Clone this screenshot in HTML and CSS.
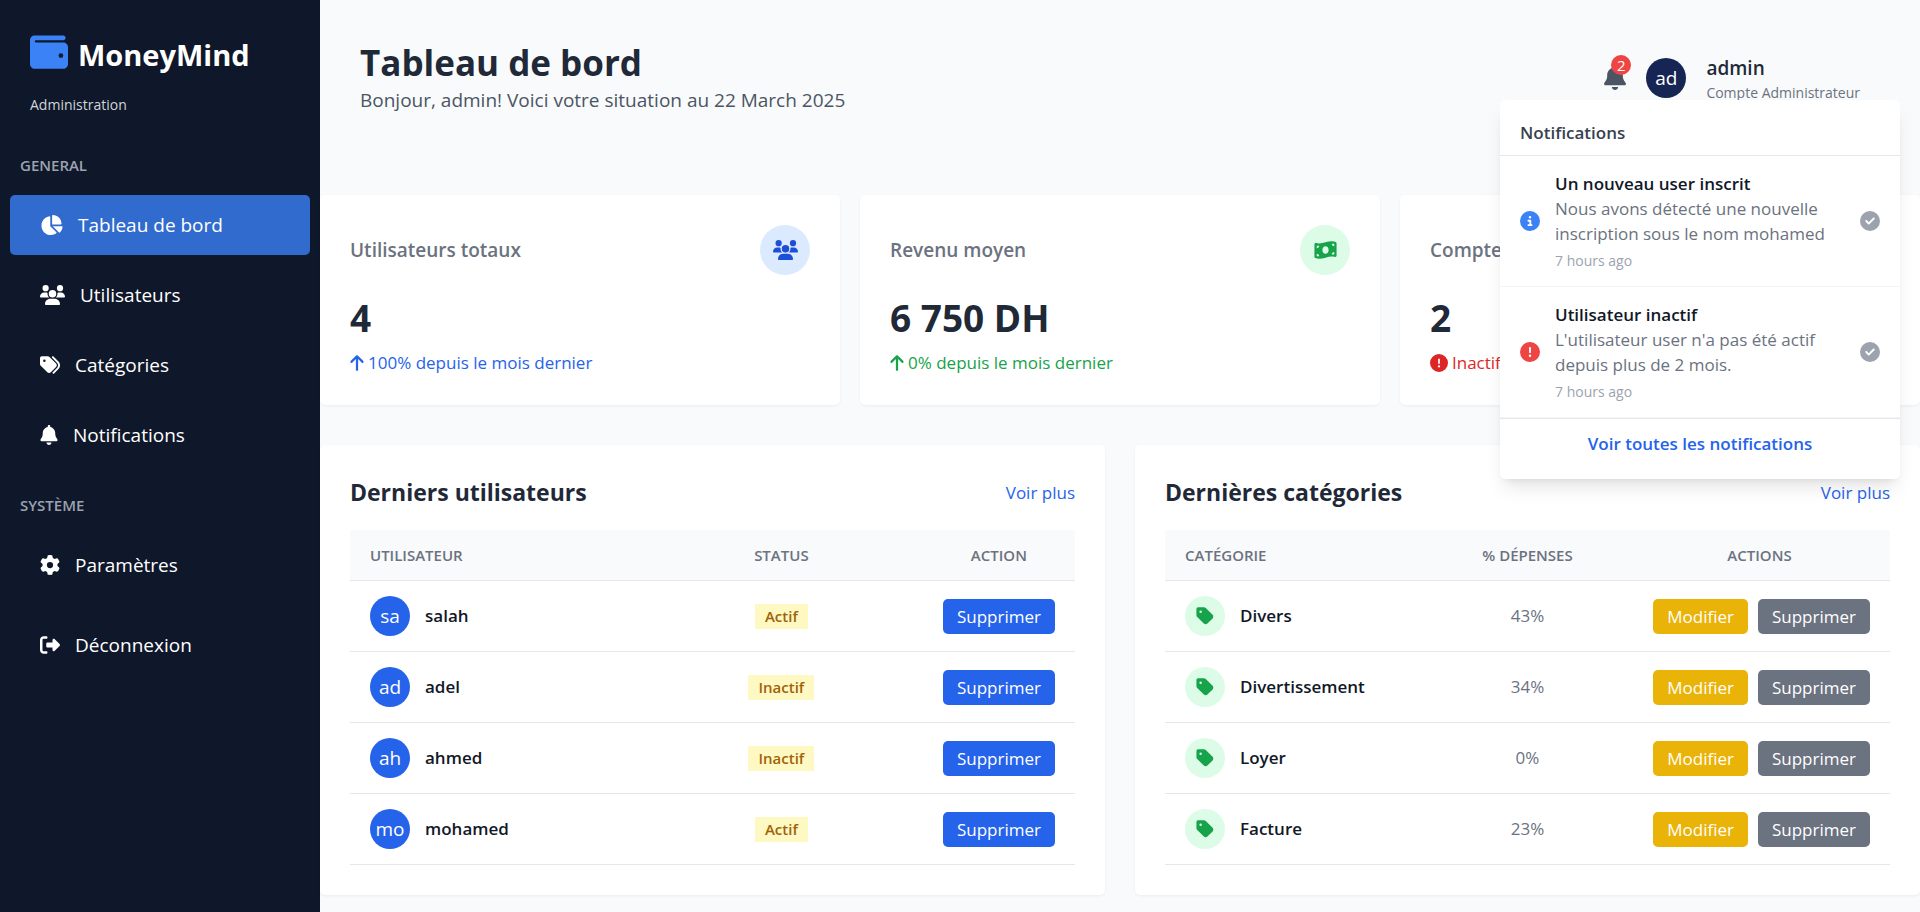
FILE: index.html
```html
<!DOCTYPE html>
<html lang="fr">
<head>
<meta charset="utf-8">
<meta name="viewport" content="width=device-width, initial-scale=1">
<title>MoneyMind - Tableau de bord</title>
<link rel="stylesheet" href="styles.css">
</head>
<body>
<svg class="sprite" aria-hidden="true">
  <symbol id="wallet" viewBox="0 0 512 512"><path d="M64 32C28.7 32 0 60.7 0 96V416c0 35.3 28.7 64 64 64H448c35.3 0 64-28.7 64-64V192c0-35.3-28.7-64-64-64H80c-8.8 0-16-7.2-16-16s7.2-16 16-16H448c17.7 0 32-14.3 32-32s-14.3-32-32-32H64zM416 272a32 32 0 1 1 0 64 32 32 0 1 1 0-64z"/></symbol>
  <symbol id="pie" viewBox="0 0 576 512"><path d="M304 240V16.6c0-9 7-16.6 16-16.6C443.7 0 544 100.3 544 224c0 9-7.6 16-16.6 16H304zM32 272C32 150.7 122.1 50.3 239 34.3c9.2-1.3 17 6.1 17 15.4V288L412.5 444.5c6.7 6.7 6.2 17.7-1.5 23.1C371.8 495.6 323.8 512 272 512C139.5 512 32 404.6 32 272zm526.4 16c9.3 0 16.6 7.8 15.4 17c-7.7 55.9-34.6 105.6-73.9 142.3c-6 5.6-15.4 5.2-21.2-.7L320 288H558.4z"/></symbol>
  <symbol id="users" viewBox="0 0 640 512"><path d="M144 0a80 80 0 1 1 0 160A80 80 0 1 1 144 0zM512 0a80 80 0 1 1 0 160A80 80 0 1 1 512 0zM0 298.7C0 239.8 47.8 192 106.7 192h42.7c15.9 0 31 3.5 44.6 9.7c-1.3 7.2-1.9 14.7-1.9 22.3c0 38.2 16.8 72.5 43.3 96c-.2 0-.4 0-.7 0H21.3C9.6 320 0 310.4 0 298.7zM405.3 320c-.2 0-.4 0-.7 0c26.6-23.5 43.3-57.8 43.3-96c0-7.6-.7-15-1.9-22.3c13.6-6.3 28.7-9.7 44.6-9.7h42.7C592.2 192 640 239.8 640 298.7c0 11.8-9.6 21.3-21.3 21.3H405.3zM224 224a96 96 0 1 1 192 0 96 96 0 1 1-192 0zM128 485.3C128 411.7 187.7 352 261.3 352H378.7C452.3 352 512 411.7 512 485.3c0 14.7-11.9 26.7-26.7 26.7H154.7c-14.7 0-26.7-11.9-26.7-26.7z"/></symbol>
  <symbol id="tags" viewBox="0 0 512 512"><path d="M345 39.1L472.8 168.4c52.4 53 52.4 138.2 0 191.2L360.8 472.9c-9.3 9.4-24.5 9.5-33.9 .2s-9.5-24.5-.2-33.9L438.6 325.9c33.9-34.3 33.9-89.4 0-123.7L310.9 72.9c-9.3-9.4-9.2-24.6 .2-33.9s24.6-9.2 33.9 .2zM0 229.5V80C0 53.5 21.5 32 48 32H197.5c17 0 33.3 6.7 45.3 18.7l168 168c25 25 25 65.5 0 90.5L277.3 442.7c-25 25-65.5 25-90.5 0l-168-168C6.7 262.7 0 246.5 0 229.5zM144 144a32 32 0 1 0 -64 0 32 32 0 1 0 64 0z"/></symbol>
  <symbol id="tag" viewBox="0 0 448 512"><path d="M0 80V229.5c0 17 6.7 33.3 18.7 45.3l176 176c25 25 65.5 25 90.5 0L418.7 317.3c25-25 25-65.5 0-90.5l-176-176c-12-12-28.3-18.7-45.3-18.7H48C21.5 32 0 53.5 0 80zm112 32a32 32 0 1 1 0 64 32 32 0 1 1 0-64z"/></symbol>
  <symbol id="bell" viewBox="0 0 448 512"><path d="M224 0c-17.7 0-32 14.3-32 32V51.2C119 66 64 130.6 64 208v18.8c0 47-17.3 92.4-48.5 127.6l-7.4 8.3c-8.4 9.4-10.4 22.9-5.3 34.4S19.4 416 32 416H416c12.6 0 24-7.4 29.2-18.9s3.1-25-5.3-34.4l-7.4-8.3C401.3 319.2 384 273.9 384 226.8V208c0-77.4-55-142-128-156.8V32c0-17.7-14.3-32-32-32zm45.3 493.3c12-12 18.7-28.3 18.7-45.3H224 160c0 17 6.7 33.3 18.7 45.3s28.3 18.7 45.3 18.7s33.3-6.7 45.3-18.7z"/></symbol>
  <symbol id="gear" viewBox="0 0 512 512"><path d="M495.9 166.6c3.2 8.7 .5 18.4-6.4 24.6l-43.3 39.4c1.1 8.3 1.7 16.8 1.7 25.4s-.6 17.1-1.7 25.4l43.3 39.4c6.9 6.2 9.6 15.9 6.4 24.6c-4.4 11.9-9.7 23.3-15.8 34.3l-4.7 8.1c-6.6 11-14 21.4-22.1 31.2c-5.9 7.2-15.7 9.6-24.5 6.8l-55.7-17.7c-13.4 10.3-28.2 18.9-44 25.4l-12.5 57.1c-2 9.1-9 16.3-18.2 17.8c-13.8 2.3-28 3.5-42.5 3.5s-28.7-1.2-42.5-3.5c-9.2-1.5-16.2-8.7-18.2-17.8l-12.5-57.1c-15.8-6.5-30.6-15.1-44-25.4L83.1 425.9c-8.8 2.8-18.6 .3-24.5-6.8c-8.1-9.8-15.5-20.2-22.1-31.2l-4.7-8.1c-6.1-11-11.4-22.4-15.8-34.3c-3.2-8.7-.5-18.4 6.4-24.6l43.3-39.4C64.6 273.1 64 264.6 64 256s.6-17.1 1.7-25.4L22.4 191.2c-6.9-6.2-9.6-15.9-6.4-24.6c4.4-11.9 9.7-23.3 15.8-34.3l4.7-8.1c6.6-11 14-21.4 22.1-31.2c5.9-7.2 15.7-9.6 24.5-6.8l55.7 17.7c13.4-10.3 28.2-18.9 44-25.4l12.5-57.1c2-9.1 9-16.3 18.2-17.8C227.3 1.2 241.5 0 256 0s28.7 1.2 42.5 3.5c9.2 1.5 16.2 8.7 18.2 17.8l12.5 57.1c15.8 6.5 30.6 15.1 44 25.4l55.7-17.7c8.8-2.8 18.6-.3 24.5 6.8c8.1 9.8 15.5 20.2 22.1 31.2l4.7 8.1c6.1 11 11.4 22.4 15.8 34.3zM256 336a80 80 0 1 0 0-160 80 80 0 1 0 0 160z"/></symbol>
  <symbol id="logout" viewBox="0 0 512 512"><path d="M377.9 105.9L500.7 228.7c7.2 7.2 11.3 17.1 11.3 27.3s-4.1 20.1-11.3 27.3L377.9 406.1c-6.4 6.4-15 9.9-24 9.9c-18.7 0-33.9-15.2-33.9-33.9l0-62.1-128 0c-17.7 0-32-14.3-32-32l0-64c0-17.7 14.3-32 32-32l128 0 0-62.1c0-18.7 15.2-33.9 33.9-33.9c9 0 17.6 3.6 24 9.9zM160 96L96 96c-17.7 0-32 14.3-32 32l0 256c0 17.7 14.3 32 32 32l64 0c17.7 0 32 14.3 32 32s-14.3 32-32 32l-64 0c-53 0-96-43-96-96L0 128C0 75 43 32 96 32l64 0c17.7 0 32 14.3 32 32s-14.3 32-32 32z"/></symbol>
  <symbol id="arrow-up" viewBox="0 0 384 512"><path d="M214.6 41.4c-12.5-12.5-32.8-12.5-45.3 0l-160 160c-12.5 12.5-12.5 32.8 0 45.3s32.8 12.5 45.3 0L160 141.2V448c0 17.7 14.3 32 32 32s32-14.3 32-32V141.2L329.4 246.6c12.5 12.5 32.8 12.5 45.3 0s12.5-32.8 0-45.3l-160-160z"/></symbol>
  <symbol id="alert" viewBox="0 0 512 512"><path d="M256 512A256 256 0 1 0 256 0a256 256 0 1 0 0 512zm0-384c13.3 0 24 10.7 24 24V264c0 13.3-10.7 24-24 24s-24-10.7-24-24V152c0-13.3 10.7-24 24-24zM224 352a32 32 0 1 1 64 0 32 32 0 1 1 -64 0z"/></symbol>
  <symbol id="info" viewBox="0 0 512 512"><path d="M256 512A256 256 0 1 0 256 0a256 256 0 1 0 0 512zM216 336h24V272H216c-13.3 0-24-10.7-24-24s10.7-24 24-24h48c13.3 0 24 10.7 24 24v88h8c13.3 0 24 10.7 24 24s-10.7 24-24 24H216c-13.3 0-24-10.7-24-24s10.7-24 24-24zm40-208a32 32 0 1 1 0 64 32 32 0 1 1 0-64z"/></symbol>
  <symbol id="check" viewBox="0 0 512 512"><path d="M256 512A256 256 0 1 0 256 0a256 256 0 1 0 0 512zM369 209L241 337c-9.4 9.4-24.6 9.4-33.9 0l-64-64c-9.4-9.4-9.4-24.6 0-33.9s24.6-9.4 33.9 0l47 47L335 175c9.4-9.4 24.6-9.4 33.9 0s9.4 24.6 0 33.9z"/></symbol>
  <symbol id="money" viewBox="0 0 576 512"><path d="M0 112.5V422.3c0 18 10.1 35 27 41.3c87 32.5 174 10.3 261-11.9c79.8-20.3 159.6-40.7 239.3-18.9c23 6.3 48.7-9.5 48.7-33.4V89.7c0-18-10.1-35-27-41.3C462 15.9 375 38.1 288 60.3C208.2 80.6 128.4 100.9 48.7 79.1C25.6 72.8 0 88.6 0 112.5zM288 352c-44.2 0-80-43-80-96s35.8-96 80-96s80 43 80 96s-35.8 96-80 96zM64 352c35.3 0 64 28.7 64 64H64V352zm64-208c0 35.3-28.7 64-64 64V144h64zM512 304v64H448c0-35.3 28.7-64 64-64zM448 96h64v64c-35.3 0-64-28.7-64-64z"/></symbol>
</svg>

<div class="layout">
  <aside class="sidebar">
    <div class="brand">
      <svg class="brand-icon" viewBox="0 0 512 512" aria-hidden="true"><use href="#wallet"/></svg>
      <span class="brand-name">MoneyMind</span>
    </div>
    <p class="brand-role">Administration</p>

    <h2 class="nav-title">GENERAL</h2>
    <nav class="nav">
      <a class="nav-link active" href="#"><svg class="icon icon-pie" viewBox="0 0 576 512" aria-hidden="true"><use href="#pie"/></svg>Tableau de bord</a>
      <a class="nav-link" href="#"><svg class="icon icon-users" viewBox="0 0 640 512" aria-hidden="true"><use href="#users"/></svg>Utilisateurs</a>
      <a class="nav-link" href="#"><svg class="icon" viewBox="0 0 512 512" aria-hidden="true"><use href="#tags"/></svg>Catégories</a>
      <a class="nav-link" href="#"><svg class="icon icon-bell" viewBox="0 0 448 512" aria-hidden="true"><use href="#bell"/></svg>Notifications</a>
    </nav>

    <h2 class="nav-title">SYSTÈME</h2>
    <nav class="nav nav-system">
      <a class="nav-link" href="#"><svg class="icon" viewBox="0 0 512 512" aria-hidden="true"><use href="#gear"/></svg>Paramètres</a>
      <button class="nav-link" type="button"><svg class="icon" viewBox="0 0 512 512" aria-hidden="true"><use href="#logout"/></svg>Déconnexion</button>
    </nav>
  </aside>

  <main class="content">
    <header class="topbar">
      <div class="topbar-heading">
        <h1 class="page-title">Tableau de bord</h1>
        <p class="page-subtitle">Bonjour, admin! Voici votre situation au 22 March 2025</p>
      </div>
      <div class="account">
        <button class="bell-button" type="button" aria-label="Notifications">
          <svg class="bell-icon" viewBox="0 0 448 512" aria-hidden="true"><use href="#bell"/></svg>
          <span class="bell-count">2</span>
        </button>
        <span class="avatar avatar-navy">ad</span>
        <div class="account-text">
          <p class="account-name">admin</p>
          <p class="account-type">Compte Administrateur</p>
        </div>
      </div>

      <section class="dropdown" aria-labelledby="dropdown-title">
        <h2 class="dropdown-title" id="dropdown-title">Notifications</h2>
        <ul class="notices">
          <li class="notice">
            <svg class="icon blue" viewBox="0 0 512 512" aria-hidden="true"><use href="#info"/></svg>
            <div class="notice-body">
              <p class="notice-title">Un nouveau user inscrit</p>
              <p class="notice-text">Nous avons détecté une nouvelle inscription sous le nom mohamed</p>
              <p class="notice-time">7 hours ago</p>
            </div>
            <button class="notice-check" type="button" aria-label="Marquer comme lu"><svg class="icon" viewBox="0 0 512 512" aria-hidden="true"><use href="#check"/></svg></button>
          </li>
          <li class="notice">
            <svg class="icon red" viewBox="0 0 512 512" aria-hidden="true"><use href="#alert"/></svg>
            <div class="notice-body">
              <p class="notice-title">Utilisateur inactif</p>
              <p class="notice-text">L'utilisateur user n'a pas été actif depuis plus de 2 mois.</p>
              <p class="notice-time">7 hours ago</p>
            </div>
            <button class="notice-check" type="button" aria-label="Marquer comme lu"><svg class="icon" viewBox="0 0 512 512" aria-hidden="true"><use href="#check"/></svg></button>
          </li>
        </ul>
        <div class="dropdown-footer"><a class="dropdown-link" href="#">Voir toutes les notifications</a></div>
      </section>
    </header>

    <section class="stats">
      <article class="card">
        <div class="card-head">
          <h2 class="card-label">Utilisateurs totaux</h2>
          <span class="card-icon card-icon-blue"><svg class="icon icon-users" viewBox="0 0 640 512" aria-hidden="true"><use href="#users"/></svg></span>
        </div>
        <p class="card-value">4</p>
        <p class="card-trend trend-blue"><svg class="trend-arrow" viewBox="0 0 384 512" aria-hidden="true"><use href="#arrow-up"/></svg>100% depuis le mois dernier</p>
      </article>
      <article class="card">
        <div class="card-head">
          <h2 class="card-label">Revenu moyen</h2>
          <span class="card-icon card-icon-green"><svg class="icon icon-pie" viewBox="0 0 576 512" aria-hidden="true"><use href="#money"/></svg></span>
        </div>
        <p class="card-value">6 750 DH</p>
        <p class="card-trend trend-green"><svg class="trend-arrow" viewBox="0 0 384 512" aria-hidden="true"><use href="#arrow-up"/></svg>0% depuis le mois dernier</p>
      </article>
      <article class="card">
        <div class="card-head">
          <h2 class="card-label">Compte</h2>
        </div>
        <p class="card-value">2</p>
        <p class="card-trend trend-red"><svg class="trend-alert" viewBox="0 0 512 512" aria-hidden="true"><use href="#alert"/></svg>Inactif</p>
      </article>
    </section>

    <div class="panels">
      <section class="panel">
        <div class="panel-head">
          <h2 class="panel-title">Derniers utilisateurs</h2>
          <a class="panel-link" href="#">Voir plus</a>
        </div>
        <table class="table">
          <colgroup><col class="col-user"><col class="col-status"><col class="col-action"></colgroup>
          <thead><tr><th scope="col">UTILISATEUR</th><th scope="col">STATUS</th><th scope="col">ACTION</th></tr></thead>
          <tbody>
            <tr><td><div class="entity"><span class="avatar">sa</span>salah</div></td><td><span class="status">Actif</span></td><td><div class="actions"><button class="btn btn-blue" type="button">Supprimer</button></div></td></tr>
            <tr><td><div class="entity"><span class="avatar">ad</span>adel</div></td><td><span class="status">Inactif</span></td><td><div class="actions"><button class="btn btn-blue" type="button">Supprimer</button></div></td></tr>
            <tr><td><div class="entity"><span class="avatar">ah</span>ahmed</div></td><td><span class="status">Inactif</span></td><td><div class="actions"><button class="btn btn-blue" type="button">Supprimer</button></div></td></tr>
            <tr><td><div class="entity"><span class="avatar">mo</span>mohamed</div></td><td><span class="status">Actif</span></td><td><div class="actions"><button class="btn btn-blue" type="button">Supprimer</button></div></td></tr>
          </tbody>
        </table>
      </section>

      <section class="panel">
        <div class="panel-head">
          <h2 class="panel-title">Dernières catégories</h2>
          <a class="panel-link" href="#">Voir plus</a>
        </div>
        <table class="table">
          <colgroup><col class="col-category"><col class="col-spending"><col class="col-actions"></colgroup>
          <thead><tr><th scope="col">CATÉGORIE</th><th scope="col">% DÉPENSES</th><th scope="col">ACTIONS</th></tr></thead>
          <tbody>
            <tr><td><div class="entity"><span class="avatar avatar-green"><svg class="tag-icon" viewBox="0 0 448 512" aria-hidden="true"><use href="#tag"/></svg></span>Divers</div></td><td>43%</td><td><div class="actions"><button class="btn btn-yellow" type="button">Modifier</button><button class="btn btn-gray" type="button">Supprimer</button></div></td></tr>
            <tr><td><div class="entity"><span class="avatar avatar-green"><svg class="tag-icon" viewBox="0 0 448 512" aria-hidden="true"><use href="#tag"/></svg></span>Divertissement</div></td><td>34%</td><td><div class="actions"><button class="btn btn-yellow" type="button">Modifier</button><button class="btn btn-gray" type="button">Supprimer</button></div></td></tr>
            <tr><td><div class="entity"><span class="avatar avatar-green"><svg class="tag-icon" viewBox="0 0 448 512" aria-hidden="true"><use href="#tag"/></svg></span>Loyer</div></td><td>0%</td><td><div class="actions"><button class="btn btn-yellow" type="button">Modifier</button><button class="btn btn-gray" type="button">Supprimer</button></div></td></tr>
            <tr><td><div class="entity"><span class="avatar avatar-green"><svg class="tag-icon" viewBox="0 0 448 512" aria-hidden="true"><use href="#tag"/></svg></span>Facture</div></td><td>23%</td><td><div class="actions"><button class="btn btn-yellow" type="button">Modifier</button><button class="btn btn-gray" type="button">Supprimer</button></div></td></tr>
          </tbody>
        </table>
      </section>
    </div>
  </main>
</div>
</body>
</html>
```
FILE: styles.css
```css
*, *::before, *::after { box-sizing: border-box; }

body {
  margin: 0;
  background: #f9fafb;
  color: #111827;
  font-family: "Segoe UI", "Open Sans", "Noto Sans", sans-serif;
  font-size: 19px;
  line-height: 30px;
}

h1, h2, p, ul { margin: 0; padding: 0; }
ul { list-style: none; }
a { color: inherit; text-decoration: none; }
button { border: 0; background: none; padding: 0; font: inherit; color: inherit; cursor: pointer; }
svg { display: block; flex: none; fill: currentColor; }

.sprite { position: absolute; width: 0; height: 0; }

.layout { display: flex; min-height: 100vh; }

/* Sidebar */
.sidebar { flex: none; width: 320px; background: #0f172a; color: #fff; }
.brand { display: flex; align-items: flex-start; gap: 10px; padding: 30px 30px 0; }
.brand-icon { width: 38px; height: 44px; color: #3b82f6; }
.brand-name { font-size: 29px; font-weight: 700; line-height: 50px; }
.brand-role { padding: 10px 30px 0; font-size: 14px; line-height: 30px; color: #d1d5db; }
.nav-title { margin: 30px 20px 15px; font-size: 15px; font-weight: 600; line-height: 30px; color: #9ca3af; }
.nav { display: flex; flex-direction: column; gap: 10px; padding: 0 10px; }
.nav-system { gap: 20px; }
.nav-link { display: flex; align-items: center; gap: 15px; width: 100%; min-height: 60px; padding: 0 30px; border-radius: 5px; text-align: left; }
.nav-link.active { background: #316bcd; }
.nav + .nav-title { margin-top: 25px; }

.icon { width: 20px; height: 20px; }
.icon-pie { width: 23px; }
.icon-users { width: 25px; }
.icon-bell { width: 18px; }
.blue { color: #3b82f6; }
.red { color: #ef4444; }

/* Content */
.content { flex: 1; min-width: 0; }
.topbar { position: relative; display: flex; justify-content: space-between; align-items: center; margin-bottom: 40px; padding: 40px; }
.page-title { font-size: 35px; font-weight: 700; line-height: 45px; color: #1f2937; }
.page-subtitle { color: #4b5563; }

.account { display: flex; align-items: center; gap: 20px; margin-right: 20px; }
.bell-button { position: relative; color: #4b5563; }
.bell-icon { width: 22px; height: 25px; }
.bell-count { position: absolute; top: -10px; right: -5px; width: 20px; height: 20px; border-radius: 50%; background: #ef4444; color: #fff; font-size: 15px; line-height: 20px; text-align: center; }
.account-name { font-weight: 600; line-height: 30px; color: #1f2937; }
.account-type { font-size: 14px; line-height: 20px; color: #6b7280; }

.avatar { display: flex; align-items: center; justify-content: center; flex: none; width: 40px; height: 40px; border-radius: 50%; background: #2563eb; color: #fff; font-weight: 400; }
.avatar-navy { background: #172554; }
.avatar-green { background: #dcfce7; color: #16a34a; }
.tag-icon { width: 18px; height: 20px; }

/* Notification menu */
.dropdown { position: absolute; z-index: 10; top: 100px; right: 20px; width: 400px; padding: 10px 0; border-radius: 5px; background: #fff; box-shadow: 0 12px 19px -4px rgba(0, 0, 0, .1), 0 5px 8px -5px rgba(0, 0, 0, .1); }
.dropdown-title { padding: 10px 20px; border-bottom: 1px solid #e5e7eb; font-size: 17px; font-weight: 600; line-height: 25px; color: #374151; }
.notice { display: flex; align-items: center; gap: 15px; padding: 15px 20px; border-bottom: 1px solid #f3f4f6; }
.notice-body { flex: 1; font-size: 17px; line-height: 25px; }
.notice-title { font-weight: 600; }
.notice-text { color: #6b7280; }
.notice-time { margin-top: 5px; font-size: 14px; line-height: 20px; color: #9ca3af; }
.notice-check { color: #9ca3af; }
.dropdown-footer { padding: 10px 20px; border-top: 1px solid #e5e7eb; text-align: center; }
.dropdown-link { display: block; font-size: 17px; font-weight: 600; color: #2563eb; }

/* Figures */
.stats { display: grid; grid-template-columns: repeat(3, 1fr); gap: 20px; margin-bottom: 40px; }
.card, .panel { padding: 30px; border-radius: 5px; background: #fff; box-shadow: 0 1px 3px rgba(0, 0, 0, .06); }
.card-head { display: flex; align-items: center; justify-content: space-between; min-height: 50px; margin-bottom: 20px; }
.card-label { font-size: 19px; font-weight: 600; color: #6b7280; }
.card-icon { display: flex; align-items: center; justify-content: center; width: 50px; height: 50px; border-radius: 50%; }
.card-icon-blue { background: #dbeafe; color: #1d4ed8; }
.card-icon-green { background: #dcfce7; color: #16a34a; }
.card-value { margin-bottom: 10px; font-size: 37px; font-weight: 700; line-height: 45px; color: #1f2937; }
.card-trend { display: flex; align-items: center; gap: 4px; font-size: 17px; line-height: 25px; }
.trend-arrow { width: 14px; height: 18px; }
.trend-alert { width: 18px; height: 18px; }
.trend-blue { color: #2563eb; }
.trend-green { color: #16a34a; }
.trend-red { color: #dc2626; }

/* Lists */
.panels { display: grid; grid-template-columns: repeat(2, 1fr); gap: 30px; }
.panel-head { display: flex; align-items: center; justify-content: space-between; margin-bottom: 20px; }
.panel-title { font-size: 23px; font-weight: 700; line-height: 35px; color: #1f2937; }
.panel-link { font-size: 17px; color: #2563eb; }
.table { width: 100%; table-layout: fixed; border-collapse: separate; border-spacing: 0; }
.table th { height: 51px; padding: 0 20px; border-bottom: 1px solid #e5e7eb; background: #f9fafb; font-size: 15px; font-weight: 600; color: #6b7280; text-align: center; }
.table td { height: 71px; padding: 0 20px; border-bottom: 1px solid #e5e7eb; font-size: 17px; color: #6b7280; text-align: center; }
.table th:first-child { text-align: left; }
.col-user { width: 40%; }
.col-status { width: 39%; }
.col-action { width: 21%; }
.col-category { width: 36%; }
.col-spending { width: 28%; }
.col-actions { width: 36%; }
.entity { display: flex; align-items: center; gap: 15px; font-weight: 600; color: #111827; }
.entity .avatar { font-size: 19px; }
.status { display: inline-block; padding: 0 10px; background: #fef9c3; color: #a16207; font-size: 15px; font-weight: 600; line-height: 25px; }
.actions { display: flex; justify-content: flex-end; gap: 10px; }
.btn { height: 35px; padding: 0 14px; border-radius: 5px; color: #fff; font-size: 17px; line-height: 35px; }
.btn-blue { background: #2563eb; }
.btn-yellow { background: #eab308; }
.btn-gray { background: #6b7280; }
```
